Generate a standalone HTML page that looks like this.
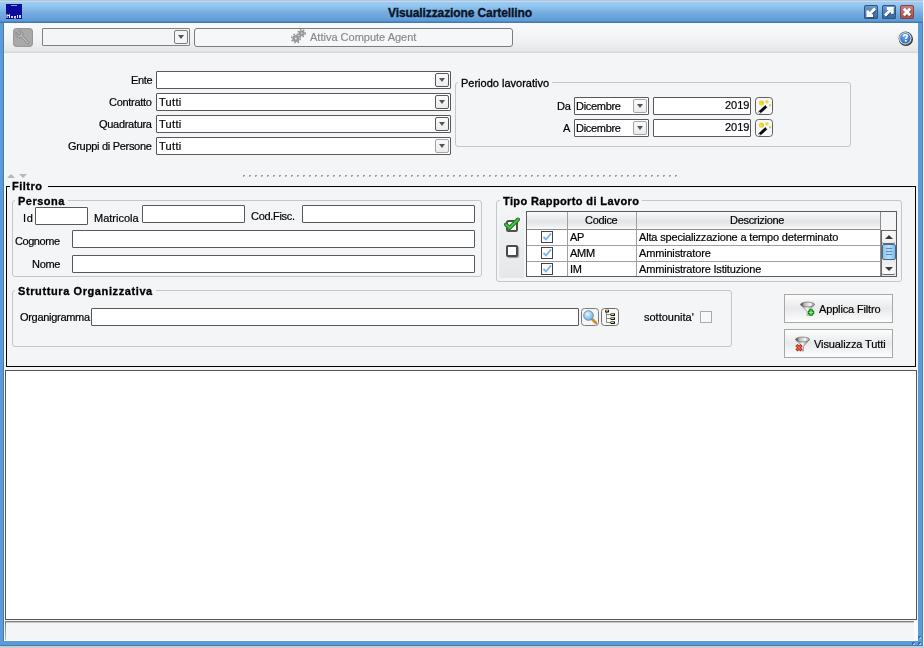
<!DOCTYPE html>
<html><head><meta charset="utf-8">
<style>
*{box-sizing:border-box;margin:0;padding:0}
html,body{width:924px;height:648px;overflow:hidden;background:#c4ced8}
body{position:relative;font-family:"Liberation Sans",sans-serif;font-size:11px;color:#000}
.a{position:absolute}
#win{left:0;top:0;width:923px;height:646px;background:#5b9bd8;border-right:1px solid #4e80b4;border-bottom:1px solid #4a78a8}
#title{left:0;top:0;width:923px;height:23px;background:linear-gradient(#b4c4d4 0,#b4c4d4 1px,#c0dcf4 1px,#c0dcf4 2px,#98ccf4 2px,#92c6f0 6px,#86bbe8 9px,#74acdf 13px,#66a2da 18px,#5a9ad8 21px,#4a7aa8 22px,#4a7aa8 23px)}
#content{left:4px;top:23px;width:914px;height:618px;background:#f4f5f7}
.lbl{will-change:transform;position:absolute;white-space:nowrap;letter-spacing:-0.3px;-webkit-text-stroke:0.2px currentColor}
.b{font-weight:bold;letter-spacing:0.5px}
.fld{position:absolute;background:#fff;border:1px solid #58585c;border-radius:1px}
.cmb{position:absolute;background:#fff;border:1px solid #58585c;border-radius:1px}
.arr{position:absolute;width:14px;height:14px;border:1px solid #58585c;border-radius:2px;background:linear-gradient(#fafafa,#ececec)}
.dis{border-color:#a4a4a4}.dis:after{border-top-color:#8a8a8a}
.arr:after{content:"";position:absolute;left:3px;top:4px;border-left:3px solid transparent;border-right:3px solid transparent;border-top:4px solid #555}
.grp{position:absolute;border:1px solid #c4c6c8;border-radius:3px}
.gt{will-change:transform;position:absolute;background:#f4f5f7;padding:0 3px;white-space:nowrap;-webkit-text-stroke:0.3px #000}
</style></head><body>
<div id="win" class="a"></div>
<div id="title" class="a"></div>
<div class="a" style="left:923px;top:0;width:1px;height:646px;background:#eefaff"></div>
<!-- logo -->
<svg class="a" style="left:6px;top:4px" width="16" height="15" viewBox="0 0 16 15"><rect width="16" height="15" fill="#0c0c9c"/><rect x="5" y="1" width="6" height="1" fill="#9a9ae6"/>
<path d="M1 14 V10.5 L2.2 12 L3.4 10.5 V14" stroke="#fff" stroke-width="1" fill="none"/><rect x="5" y="12" width="2" height="2" fill="#d8d8f4"/><rect x="8" y="12" width="2" height="2.5" fill="#d0d0f0"/><rect x="11" y="11" width="1" height="3" fill="#e0e0f8"/><rect x="13" y="11" width="2" height="3" fill="#d0d0f0"/></svg>
<div class="a b" style="left:388px;top:6px;font-size:12px;letter-spacing:-0.1px;color:#0a1428;-webkit-text-stroke:0.35px #0a1428">Visualizzazione Cartellino</div>
<!-- title buttons -->
<svg class="a" style="left:864px;top:5px" width="14" height="14" viewBox="0 0 14 14">
<defs><linearGradient id="gb" x1="0" y1="0" x2="0" y2="1"><stop offset="0" stop-color="#6f9fcc"/><stop offset="1" stop-color="#36669a"/></linearGradient>
<linearGradient id="gr" x1="0" y1="0" x2="0" y2="1"><stop offset="0" stop-color="#c88484"/><stop offset="1" stop-color="#a0504e"/></linearGradient></defs>
<rect x="0" y="0" width="14" height="14" rx="1.5" fill="url(#gb)"/><rect x="0.5" y="0.5" width="13" height="13" rx="1.5" fill="none" stroke="#2e5784" stroke-width="1"/>
<path d="M11.3 4.3 L6 9.6 M4.3 6.2 V11.2 H9.3" stroke="#1a3a5a" stroke-width="2.8" fill="none" opacity="0.5" transform="translate(0.7,0.7)"/><path d="M11 3.5 L5.5 9 M3.8 5.5 V10.7 H9" stroke="#fff" stroke-width="2.8" fill="none"/></svg>
<svg class="a" style="left:882px;top:5px" width="14" height="14" viewBox="0 0 14 14">
<rect x="0" y="0" width="14" height="14" rx="1.5" fill="url(#gb)"/><rect x="0.5" y="0.5" width="13" height="13" rx="1.5" fill="none" stroke="#2e5784" stroke-width="1"/>
<path d="M3.5 10.8 L9 5.3 M5.2 3.8 H10.5 V9" stroke="#1a3a5a" stroke-width="2.8" fill="none" opacity="0.5" transform="translate(0.7,0.7)"/><path d="M3 10.5 L8.5 5 M4.8 3.5 H10.3 V8.8" stroke="#fff" stroke-width="2.8" fill="none"/></svg>
<svg class="a" style="left:900px;top:5px" width="14" height="14" viewBox="0 0 14 14">
<rect x="0" y="0" width="14" height="14" rx="1.5" fill="url(#gr)"/><rect x="0.5" y="0.5" width="13" height="13" rx="1.5" fill="none" stroke="#8a4040" stroke-width="1"/>
<path d="M4 4 L10.5 10.5 M10.5 4 L4 10.5" stroke="#5a2020" stroke-width="2.8" opacity="0.5" transform="translate(0.6,0.6)"/><path d="M3.8 3.8 L10.2 10.2 M10.2 3.8 L3.8 10.2" stroke="#fff" stroke-width="2.8"/></svg>

<div id="content" class="a"></div>
<div class="a" style="left:3px;top:23px;width:1px;height:618px;background:#4a7aa8"></div>
<div class="a" style="left:4px;top:23px;width:1px;height:618px;background:#f0fcff"></div>
<!-- toolbar -->
<div class="a" style="left:4px;top:23px;width:914px;height:30px;background:linear-gradient(#f0faff 0,#f8f9fa 2px,#f0f1f3 18px,#e6e7e9 28px,#d8d9db 29px,#d8d9db 30px)"></div>
<svg class="a" style="left:13px;top:28px" width="20" height="19" viewBox="0 0 20 19"><rect x="0" y="0" width="20" height="19" rx="4" fill="#a9a9a9"/><rect x="0.5" y="0.5" width="19" height="18" rx="3.5" fill="none" stroke="#979797"/>
<path d="M3.2 4 C2.2 6.2 3 8.8 5.4 9.6 C6.4 9.9 7.4 9.8 8.2 9.4 L14.2 15.6 C15 16.4 16.6 15.2 15.8 14.2 L9.8 7.8 C10.3 6.6 10.2 5 9.2 3.8 C8.4 2.9 7 2.4 6 2.6 L7.8 4.8 L7 6.8 L5 7 Z" fill="#b0b0b0" stroke="#8c8c8c" stroke-width="1"/>
<path d="M9 8.6 L14.8 14.8" stroke="#c4c4c4" stroke-width="0.8"/></svg>
<div class="cmb" style="left:42px;top:28px;width:148px;height:18px;background:#f4f5f7;border-color:#808080"></div>
<div class="arr dis" style="left:174px;top:30px;border-color:#7c7c7c;background:#f4f5f7"></div>
<div class="a" style="left:194px;top:28px;width:319px;height:19px;border:1px solid #7c7c7c;border-radius:3px;background:#f6f7f8"></div>
<div class="lbl" style="left:310px;top:31px;color:#8a8a8a;letter-spacing:0">Attiva Compute Agent</div>
<svg class="a" style="left:290px;top:28px" width="17" height="17" viewBox="0 0 17 17">
<circle cx="6" cy="10.5" r="3.6" fill="#999"/><circle cx="6" cy="10.5" r="4.3" fill="none" stroke="#999" stroke-width="1.6" stroke-dasharray="1.7 1.7"/>
<circle cx="11.5" cy="5.3" r="3" fill="#999"/><circle cx="11.5" cy="5.3" r="3.6" fill="none" stroke="#999" stroke-width="1.5" stroke-dasharray="1.5 1.5"/>
<circle cx="5.8" cy="10.5" r="0.9" fill="#f0f0f0"/><circle cx="11.8" cy="5.3" r="0.8" fill="#e8e8e8"/></svg>
<svg class="a" style="left:897px;top:30px" width="17" height="17" viewBox="0 0 17 17"><defs><radialGradient id="hg" cx="0.45" cy="0.35" r="0.65"><stop offset="0" stop-color="#74b0ec"/><stop offset="1" stop-color="#2f66b4"/></radialGradient></defs>
<circle cx="8.9" cy="8.9" r="7.1" fill="#333"/><circle cx="8.3" cy="8.3" r="6.7" fill="#666"/><circle cx="8.3" cy="8.3" r="6.1" fill="#d4eafc"/><circle cx="8.3" cy="8.3" r="5.2" fill="url(#hg)"/>
<path d="M6.4 6.6 C6.4 5.3 7.3 4.8 8.3 4.8 C9.4 4.8 10.2 5.4 10.2 6.4 C10.2 7.5 8.8 7.6 8.8 8.9" stroke="#fff" stroke-width="1.6" fill="none"/><rect x="7.9" y="10" width="1.8" height="1.6" fill="#fff"/></svg>

<!-- top form -->
<div class="lbl" style="right:772px;top:74px">Ente</div>
<div class="lbl" style="right:772px;top:96px">Contratto</div>
<div class="lbl" style="right:772px;top:118px">Quadratura</div>
<div class="lbl" style="right:772px;top:140px">Gruppi di Persone</div>
<div class="cmb" style="left:156px;top:71px;width:295px;height:18px"></div>
<div class="arr" style="left:435px;top:73px"></div>
<div class="cmb" style="left:156px;top:93px;width:295px;height:18px"></div>
<div class="arr" style="left:435px;top:95px"></div>
<div class="lbl" style="left:159px;top:96px;letter-spacing:0.3px">Tutti</div>
<div class="cmb" style="left:156px;top:115px;width:295px;height:18px"></div>
<div class="arr" style="left:435px;top:117px"></div>
<div class="lbl" style="left:159px;top:118px;letter-spacing:0.3px">Tutti</div>
<div class="cmb" style="left:156px;top:137px;width:295px;height:18px"></div>
<div class="arr dis" style="left:435px;top:139px"></div>
<div class="lbl" style="left:159px;top:140px;letter-spacing:0.3px">Tutti</div>

<!-- periodo -->
<div class="grp" style="left:455px;top:82px;width:396px;height:65px"></div>
<div class="gt" style="left:458px;top:77px">Periodo lavorativo</div>
<div class="lbl" style="left:557px;top:100px">Da</div>
<div class="lbl" style="left:563px;top:122px">A</div>
<div class="cmb" style="left:574px;top:97px;width:75px;height:18px"></div>
<div class="arr dis" style="left:633px;top:99px"></div>
<div class="lbl" style="left:576px;top:100px">Dicembre</div>
<div class="cmb" style="left:574px;top:119px;width:75px;height:18px"></div>
<div class="arr dis" style="left:633px;top:121px"></div>
<div class="lbl" style="left:576px;top:122px">Dicembre</div>
<div class="fld" style="left:653px;top:97px;width:98px;height:18px"></div>
<div class="lbl" style="right:175px;top:99px;letter-spacing:0">2019</div>
<div class="fld" style="left:653px;top:119px;width:98px;height:18px"></div>
<div class="lbl" style="right:175px;top:121px;letter-spacing:0">2019</div>
<svg class="a" style="left:755px;top:97px" width="18" height="18" viewBox="0 0 18 18"><rect x="0.5" y="0.5" width="17" height="17" rx="3" fill="#f7f7f8" stroke="#606060"/>
<circle cx="6.5" cy="6" r="2.6" fill="#e6cc2a"/><circle cx="5.8" cy="6.6" r="1.4" fill="#f4e040"/><circle cx="12" cy="4.8" r="1.7" fill="#ecd83a"/><circle cx="15" cy="8.2" r="1.2" fill="#d8d070"/>
<path d="M5 15 L11 9.5" stroke="#0a0a0a" stroke-width="3" stroke-linecap="round"/><circle cx="12.2" cy="8.6" r="1.4" fill="#fff"/><circle cx="4.5" cy="15.6" r="0.9" fill="#ddd"/></svg>
<svg class="a" style="left:755px;top:119px" width="18" height="18" viewBox="0 0 18 18"><rect x="0.5" y="0.5" width="17" height="17" rx="3" fill="#f7f7f8" stroke="#606060"/>
<circle cx="6.5" cy="6" r="2.6" fill="#e6cc2a"/><circle cx="5.8" cy="6.6" r="1.4" fill="#f4e040"/><circle cx="12" cy="4.8" r="1.7" fill="#ecd83a"/><circle cx="15" cy="8.2" r="1.2" fill="#d8d070"/>
<path d="M5 15 L11 9.5" stroke="#0a0a0a" stroke-width="3" stroke-linecap="round"/><circle cx="12.2" cy="8.6" r="1.4" fill="#fff"/><circle cx="4.5" cy="15.6" r="0.9" fill="#ddd"/></svg>

<!-- dotted separator -->
<div class="a" style="left:243px;top:175px;width:434px;height:1px;background:repeating-linear-gradient(90deg,#9c9c9c 0,#9c9c9c 2px,transparent 2px,transparent 6px)"></div>
<div class="a" style="left:243px;top:176px;width:434px;height:1px;background:repeating-linear-gradient(90deg,#a4a4a4 0,#a4a4a4 1px,#e0e0e0 1px,#e0e0e0 2px,transparent 2px,transparent 6px)"></div>
<div class="a" style="left:7px;top:174px;border-left:4px solid transparent;border-right:4px solid transparent;border-bottom:4px solid #b8b8b8"></div>
<div class="a" style="left:19px;top:174px;border-left:4px solid transparent;border-right:4px solid transparent;border-top:4px solid #b8b8b8"></div>

<!-- Filtro -->
<div class="a" style="left:6px;top:186px;width:910px;height:181px;border:1px solid #000"></div>
<div class="gt b" style="left:10px;top:180px;padding:0 5px 0 2px">Filtro</div>

<!-- Persona -->
<div class="grp" style="left:12px;top:200px;width:470px;height:77px"></div>
<div class="gt b" style="left:15px;top:195px">Persona</div>
<div class="lbl" style="left:23px;top:212px;letter-spacing:0.8px">Id</div>
<div class="fld" style="left:35px;top:207px;width:53px;height:18px"></div>
<div class="lbl" style="left:94px;top:212px;letter-spacing:0">Matricola</div>
<div class="fld" style="left:142px;top:205px;width:103px;height:18px"></div>
<div class="lbl" style="left:251px;top:210px">Cod.Fisc.</div>
<div class="fld" style="left:302px;top:205px;width:173px;height:18px"></div>
<div class="lbl" style="left:15px;top:235px;letter-spacing:-0.45px">Cognome</div>
<div class="fld" style="left:72px;top:230px;width:403px;height:18px"></div>
<div class="lbl" style="left:32px;top:258px">Nome</div>
<div class="fld" style="left:72px;top:255px;width:403px;height:18px"></div>

<!-- Tipo Rapporto -->
<div class="grp" style="left:496px;top:200px;width:406px;height:82px"></div>
<div class="gt b" style="left:500px;top:195px;letter-spacing:0.38px">Tipo Rapporto di Lavoro</div>
<div class="a" style="left:499px;top:208px;width:25px;height:70px;background:linear-gradient(#f4f5f7,#eeeff1 40%,#e6e7e9)"></div>
<svg class="a" style="left:504px;top:217px" width="16" height="15" viewBox="0 0 16 15">
<rect x="3" y="4" width="10" height="10" rx="1.5" fill="#fff" stroke="#505050" stroke-width="2"/>
<path d="M2 7.5 L5.5 11 L14 2.5" stroke="#1f7a1f" stroke-width="4" fill="none" stroke-linecap="round" stroke-linejoin="round"/>
<path d="M2 7.5 L5.5 11 L14 2.5" stroke="#44c044" stroke-width="2" fill="none" stroke-linecap="round" stroke-linejoin="round"/></svg>
<div class="a" style="left:506px;top:245px;width:12px;height:12px;border:2px solid #4a4a4a;border-radius:2px;background:#fff;box-shadow:1px 1px 1px #999"></div>
<div class="a" style="left:526px;top:211px;width:371px;height:66px;border:1px solid #5a5a5a;background:#fff"></div>
<div class="a" style="left:527px;top:212px;width:354px;height:17px;background:linear-gradient(#fafbfc 0,#f2f3f5 3px,#e2e4e7 9px,#eceef0 14px,#fafbfb 17px)"></div>
<div class="a" style="left:881px;top:212px;width:15px;height:18px;background:#f4f5f7"></div>
<div class="a" style="left:527px;top:229px;width:354px;height:1px;background:#8c8c8c"></div>
<div class="a" style="left:527px;top:245px;width:354px;height:1px;background:#a0a0a0"></div>
<div class="a" style="left:527px;top:261px;width:354px;height:1px;background:#a0a0a0"></div>
<div class="a" style="left:567px;top:212px;width:1px;height:64px;background:#a0a0a0"></div>
<div class="a" style="left:636px;top:212px;width:1px;height:64px;background:#a0a0a0"></div>
<div class="a" style="left:880px;top:212px;width:1px;height:64px;background:#8c8c8c"></div>
<div class="lbl" style="left:585px;top:214px">Codice</div>
<div class="lbl" style="left:730px;top:214px">Descrizione</div>
<svg class="a" style="left:541px;top:231px" width="12" height="12" viewBox="0 0 12 12"><rect x="0.5" y="0.5" width="11" height="11" fill="#fbfbfb" stroke="#444"/><path d="M2.5 6 L5 8.5 L10 2.5" stroke="#7ab4e6" stroke-width="1.8" fill="none"/></svg>
<div class="lbl" style="left:570px;top:231px">AP</div>
<div class="lbl" style="left:639px;top:231px;letter-spacing:-0.17px">Alta specializzazione a tempo determinato</div>
<svg class="a" style="left:541px;top:247px" width="12" height="12" viewBox="0 0 12 12"><rect x="0.5" y="0.5" width="11" height="11" fill="#fbfbfb" stroke="#444"/><path d="M2.5 6 L5 8.5 L10 2.5" stroke="#7ab4e6" stroke-width="1.8" fill="none"/></svg>
<div class="lbl" style="left:570px;top:247px">AMM</div>
<div class="lbl" style="left:639px;top:247px;letter-spacing:-0.17px">Amministratore</div>
<svg class="a" style="left:541px;top:263px" width="12" height="12" viewBox="0 0 12 12"><rect x="0.5" y="0.5" width="11" height="11" fill="#fbfbfb" stroke="#444"/><path d="M2.5 6 L5 8.5 L10 2.5" stroke="#7ab4e6" stroke-width="1.8" fill="none"/></svg>
<div class="lbl" style="left:570px;top:263px">IM</div>
<div class="lbl" style="left:639px;top:263px;letter-spacing:-0.17px">Amministratore Istituzione</div>
<!-- scrollbar -->
<div class="a" style="left:881px;top:230px;width:15px;height:46px;background:#e8e9eb;border-left:1px solid #6a6a6a;border-top:1px solid #6a6a6a"></div>
<div class="a" style="left:882px;top:231px;width:13px;height:13px;border-radius:2px;background:linear-gradient(#fdfdfd,#ececee);border-bottom:1px solid #666"></div>
<div class="a" style="left:885px;top:235px;border-left:4px solid transparent;border-right:4px solid transparent;border-bottom:4px solid #3c3c3c"></div>
<div class="a" style="left:882px;top:244px;width:14px;height:16px;border:1px solid #4a6a8a;border-radius:2px;background:linear-gradient(90deg,#8cc4f0,#b8e0fc 50%,#80b8e8)"></div>
<div class="a" style="left:886px;top:248px;width:6px;height:1px;background:#5a8ac0"></div>
<div class="a" style="left:886px;top:251px;width:6px;height:1px;background:#5a8ac0"></div>
<div class="a" style="left:886px;top:254px;width:6px;height:1px;background:#5a8ac0"></div>
<div class="a" style="left:882px;top:261px;width:13px;height:14px;border-radius:2px;background:linear-gradient(#ececee,#fdfdfd);border-bottom:1px solid #666"></div>
<div class="a" style="left:885px;top:267px;border-left:4px solid transparent;border-right:4px solid transparent;border-top:4px solid #3c3c3c"></div>

<!-- Struttura -->
<div class="grp" style="left:12px;top:290px;width:720px;height:57px"></div>
<div class="gt b" style="left:15px;top:285px;letter-spacing:0.6px">Struttura Organizzativa</div>
<div class="lbl" style="left:20px;top:311px">Organigramma</div>
<div class="fld" style="left:91px;top:308px;width:488px;height:18px"></div>
<svg class="a" style="left:581px;top:308px" width="18" height="18" viewBox="0 0 18 18"><defs><radialGradient id="lg" cx="0.4" cy="0.35" r="0.7"><stop offset="0" stop-color="#e8f6ff"/><stop offset="1" stop-color="#5aaee8"/></radialGradient></defs>
<rect x="0.5" y="0.5" width="17" height="17" rx="3" fill="#f6f6f6" stroke="#7a7a7a"/>
<path d="M10.5 10.5 L15 15" stroke="#d88a2a" stroke-width="2.6" stroke-linecap="round"/><circle cx="7.5" cy="7.5" r="4.8" fill="url(#lg)" stroke="#6a90b0" stroke-width="1"/></svg>
<svg class="a" style="left:601px;top:308px" width="18" height="18" viewBox="0 0 18 18"><rect x="0.5" y="0.5" width="17" height="17" rx="3" fill="#f8f8f8" stroke="#6e6e6e"/>
<path d="M5.5 3.5 V14.5 H10 M5.5 6.5 H10 M5.5 10.5 H10" stroke="#8a8a8a" stroke-width="1" fill="none"/>
<rect x="4" y="1.8" width="4" height="2.6" rx="0.6" fill="#111"/><rect x="4.6" y="2.2" width="2.4" height="1.2" fill="#e8e890"/>
<rect x="9.5" y="5.3" width="4.5" height="2.6" rx="0.6" fill="#111"/><rect x="10.1" y="5.7" width="2.8" height="1.2" fill="#e8e890"/>
<rect x="9.5" y="9.3" width="4.5" height="2.6" rx="0.6" fill="#111"/><rect x="10.1" y="9.7" width="2.8" height="1.2" fill="#e8e890"/>
<rect x="9.5" y="13.3" width="4.5" height="2.6" rx="0.6" fill="#111"/><rect x="10.1" y="13.7" width="2.8" height="1.2" fill="#e8e890"/></svg>
<div class="lbl" style="left:644px;top:311px;letter-spacing:0">sottounita'</div>
<div class="a" style="left:700px;top:311px;width:12px;height:12px;border:1px solid #aaa;background:#f8f8f8"></div>

<!-- buttons -->
<div class="a" style="left:784px;top:294px;width:109px;height:29px;border:1px solid #a8a8a8;background:linear-gradient(#fdfdfd,#e8e9eb 50%,#fdfdfd)"></div>
<div class="lbl" style="left:819px;top:303px;letter-spacing:-0.15px">Applica Filtro</div>
<svg class="a" style="left:799px;top:301px" width="17" height="16" viewBox="0 0 17 16"><defs><linearGradient id="fg" x1="0" y1="0" x2="1" y2="0"><stop offset="0" stop-color="#3a3a3a"/><stop offset="0.3" stop-color="#bdbdbd"/><stop offset="0.7" stop-color="#f6f6f6"/><stop offset="1" stop-color="#8a8a8a"/></linearGradient>
<linearGradient id="fc" x1="0" y1="0" x2="1" y2="0"><stop offset="0" stop-color="#9a9a9a"/><stop offset="0.5" stop-color="#f4f4f4"/><stop offset="1" stop-color="#6a6a6a"/></linearGradient></defs>
<path d="M2 4 L8 10.5 V14.5 L9.5 14.5 V10.5 L15 4 Z" fill="url(#fc)" stroke="#8a8a8a" stroke-width="0.6"/>
<ellipse cx="8.5" cy="3.5" rx="7" ry="2.4" fill="url(#fg)" stroke="#6a6a6a" stroke-width="0.7"/>
<path d="M8.8 11.5 H15.2 M12 8.3 V14.7" stroke="#087a08" stroke-width="3.6"/><path d="M9.8 11.5 H14.2 M12 9.3 V13.7" stroke="#7cf07c" stroke-width="1.4"/></svg>
<div class="a" style="left:784px;top:329px;width:109px;height:29px;border:1px solid #a8a8a8;background:linear-gradient(#fdfdfd,#e8e9eb 50%,#fdfdfd)"></div>
<div class="lbl" style="left:814px;top:338px;letter-spacing:-0.1px">Visualizza Tutti</div>
<svg class="a" style="left:794px;top:336px" width="17" height="16" viewBox="0 0 17 16">
<path d="M2 4 L8 10.5 V15 L9.5 15 V10.5 L15 4 Z" fill="url(#fc)" stroke="#7a7a7a" stroke-width="0.6"/>
<ellipse cx="8.5" cy="3.5" rx="7" ry="2.4" fill="url(#fg)" stroke="#6a6a6a" stroke-width="0.7"/>
<path d="M2.5 9 L7.5 14.5 M7.5 9 L2.5 14.5" stroke="#b02020" stroke-width="3"/><path d="M3 9.5 L7 14 M7 9.5 L3 14" stroke="#f06030" stroke-width="1.4"/></svg>

<!-- white area -->
<div class="a" style="left:5px;top:370px;width:912px;height:250px;background:#fff;border:1px solid #555"></div>
<!-- status bar -->
<div class="a" style="left:5px;top:621px;width:909px;height:20px;background:linear-gradient(#666 0,#999 1px,#f4f5f7 2px)"></div>
<div class="a" style="left:5px;top:622px;width:1px;height:18px;background:linear-gradient(#777,#bbb)"></div>
<div class="a" style="left:914px;top:621px;width:4px;height:20px;background:#fbfcfd"></div>
<div class="a" style="left:4px;top:640px;width:914px;height:1px;background:#fbfdff"></div>
<div class="a" style="left:912px;top:642px;width:3px;height:3px;background:linear-gradient(135deg,#3a70b0 50%,#9cc8f0 50%)"></div>
<div class="a" style="left:918px;top:642px;width:3px;height:3px;background:linear-gradient(135deg,#3a70b0 50%,#9cc8f0 50%)"></div>
<div class="a" style="left:918px;top:636px;width:3px;height:3px;background:linear-gradient(135deg,#3a70b0 50%,#9cc8f0 50%)"></div>
</body></html>
